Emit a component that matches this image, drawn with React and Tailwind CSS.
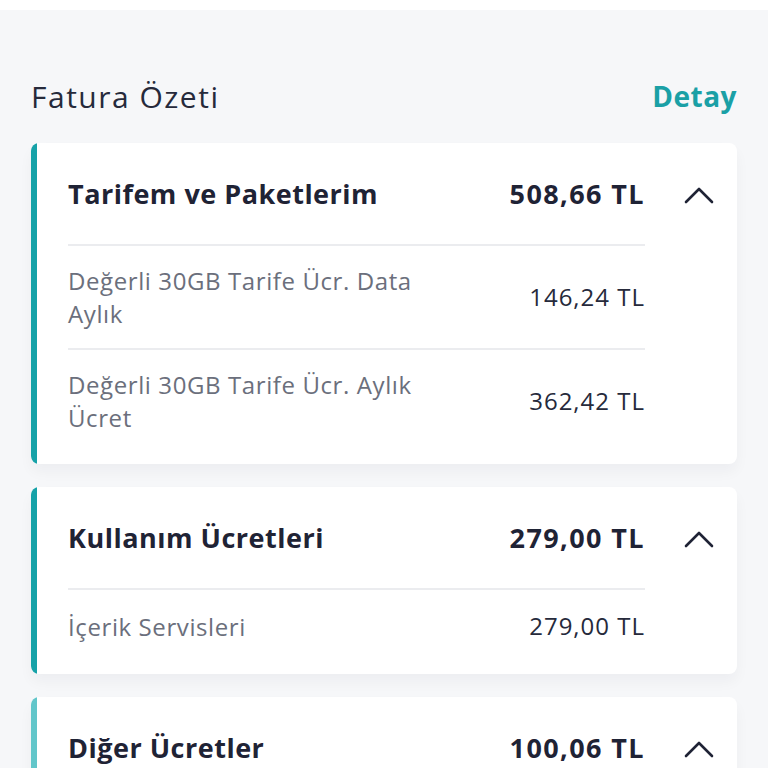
const sections = [
  {
    title: 'Tarifem ve Paketlerim',
    total: '508,66 TL',
    bar: 'bg-[#16a2a8]',
    items: [
      { label: ['Değerli 30GB Tarife Ücr. Data', 'Aylık'], amount: '146,24 TL' },
      { label: ['Değerli 30GB Tarife Ücr. Aylık', 'Ücret'], amount: '362,42 TL' },
    ],
  },
  {
    title: 'Kullanım Ücretleri',
    total: '279,00 TL',
    bar: 'bg-[#16a2a8]',
    items: [{ label: ['İçerik Servisleri'], amount: '279,00 TL' }],
  },
  {
    title: 'Diğer Ücretler',
    total: '100,06 TL',
    bar: 'bg-[#62c6ca]',
    items: [{ label: ['Diğer'], amount: '100,06 TL' }],
  },
]

const Chevron = () => (
  <svg width="30" height="18" viewBox="0 0 30 18" fill="none" className="shrink-0">
    <path d="M2 16 L15 3 L28 16" stroke="#1f2335" strokeWidth="2.6" strokeLinecap="round" strokeLinejoin="round" />
  </svg>
)

const SectionCard = ({ section }) => (
  <div className="relative bg-white rounded-lg shadow-[0_8px_14px_rgba(30,35,50,0.04)] overflow-hidden">
    {/* left accent */}
    <div className={`absolute left-0 top-0 bottom-0 w-[6px] rounded-l-lg ${section.bar}`} />
    <div className="pl-[37px] pr-[23px] pb-[12px]">
      <div className="flex items-center h-[103px] pt-[2px] border-b-2 border-[#ebecef] mr-[69px]">
        <span className="flex-1 text-[27px] tracking-[0.5px] font-bold text-[#1f2335]">{section.title}</span>
        <span className="text-[27px] tracking-[1.4px] font-bold text-[#1f2335]">{section.total}</span>
      </div>
      {section.items.map((item, i) => (
        <div
          key={i}
          className={`flex items-center py-[18px] mr-[69px] ${i < section.items.length - 1 ? 'border-b-2 border-[#ebecef]' : ''}`}
        >
          <span className="flex-1 text-[24px] tracking-[0.6px] leading-[33px] text-[#6b6f7c]">
            {item.label.map((l, j) => (
              <span key={j} className="block">{l}</span>
            ))}
          </span>
          <span className="text-[24px] tracking-[1px] text-[#262a3b]">{item.amount}</span>
        </div>
      ))}
    </div>
    <div className="absolute right-[23px] top-[43px]">
      <Chevron />
    </div>
  </div>
)

export default function App() {
  return (
    <div className="w-[768px] h-[768px] overflow-hidden bg-white font-['Open_Sans',sans-serif]">
      <div className="mt-[10px] h-[758px] bg-[#f6f7f9] px-[31px] pt-[64px]">
        <div className="flex items-center justify-between h-[44px] mb-[25px]">
          <h1 className="text-[30px] tracking-[1.5px] font-normal text-[#262a3b]">Fatura Özeti</h1>
          <a className="text-[28px] tracking-[0.5px] font-bold text-[#1aa0a6]">Detay</a>
        </div>
        <div className="flex flex-col gap-[23px]">
          {sections.map((s, i) => (
            <SectionCard key={i} section={s} />
          ))}
        </div>
      </div>
    </div>
  )
}
